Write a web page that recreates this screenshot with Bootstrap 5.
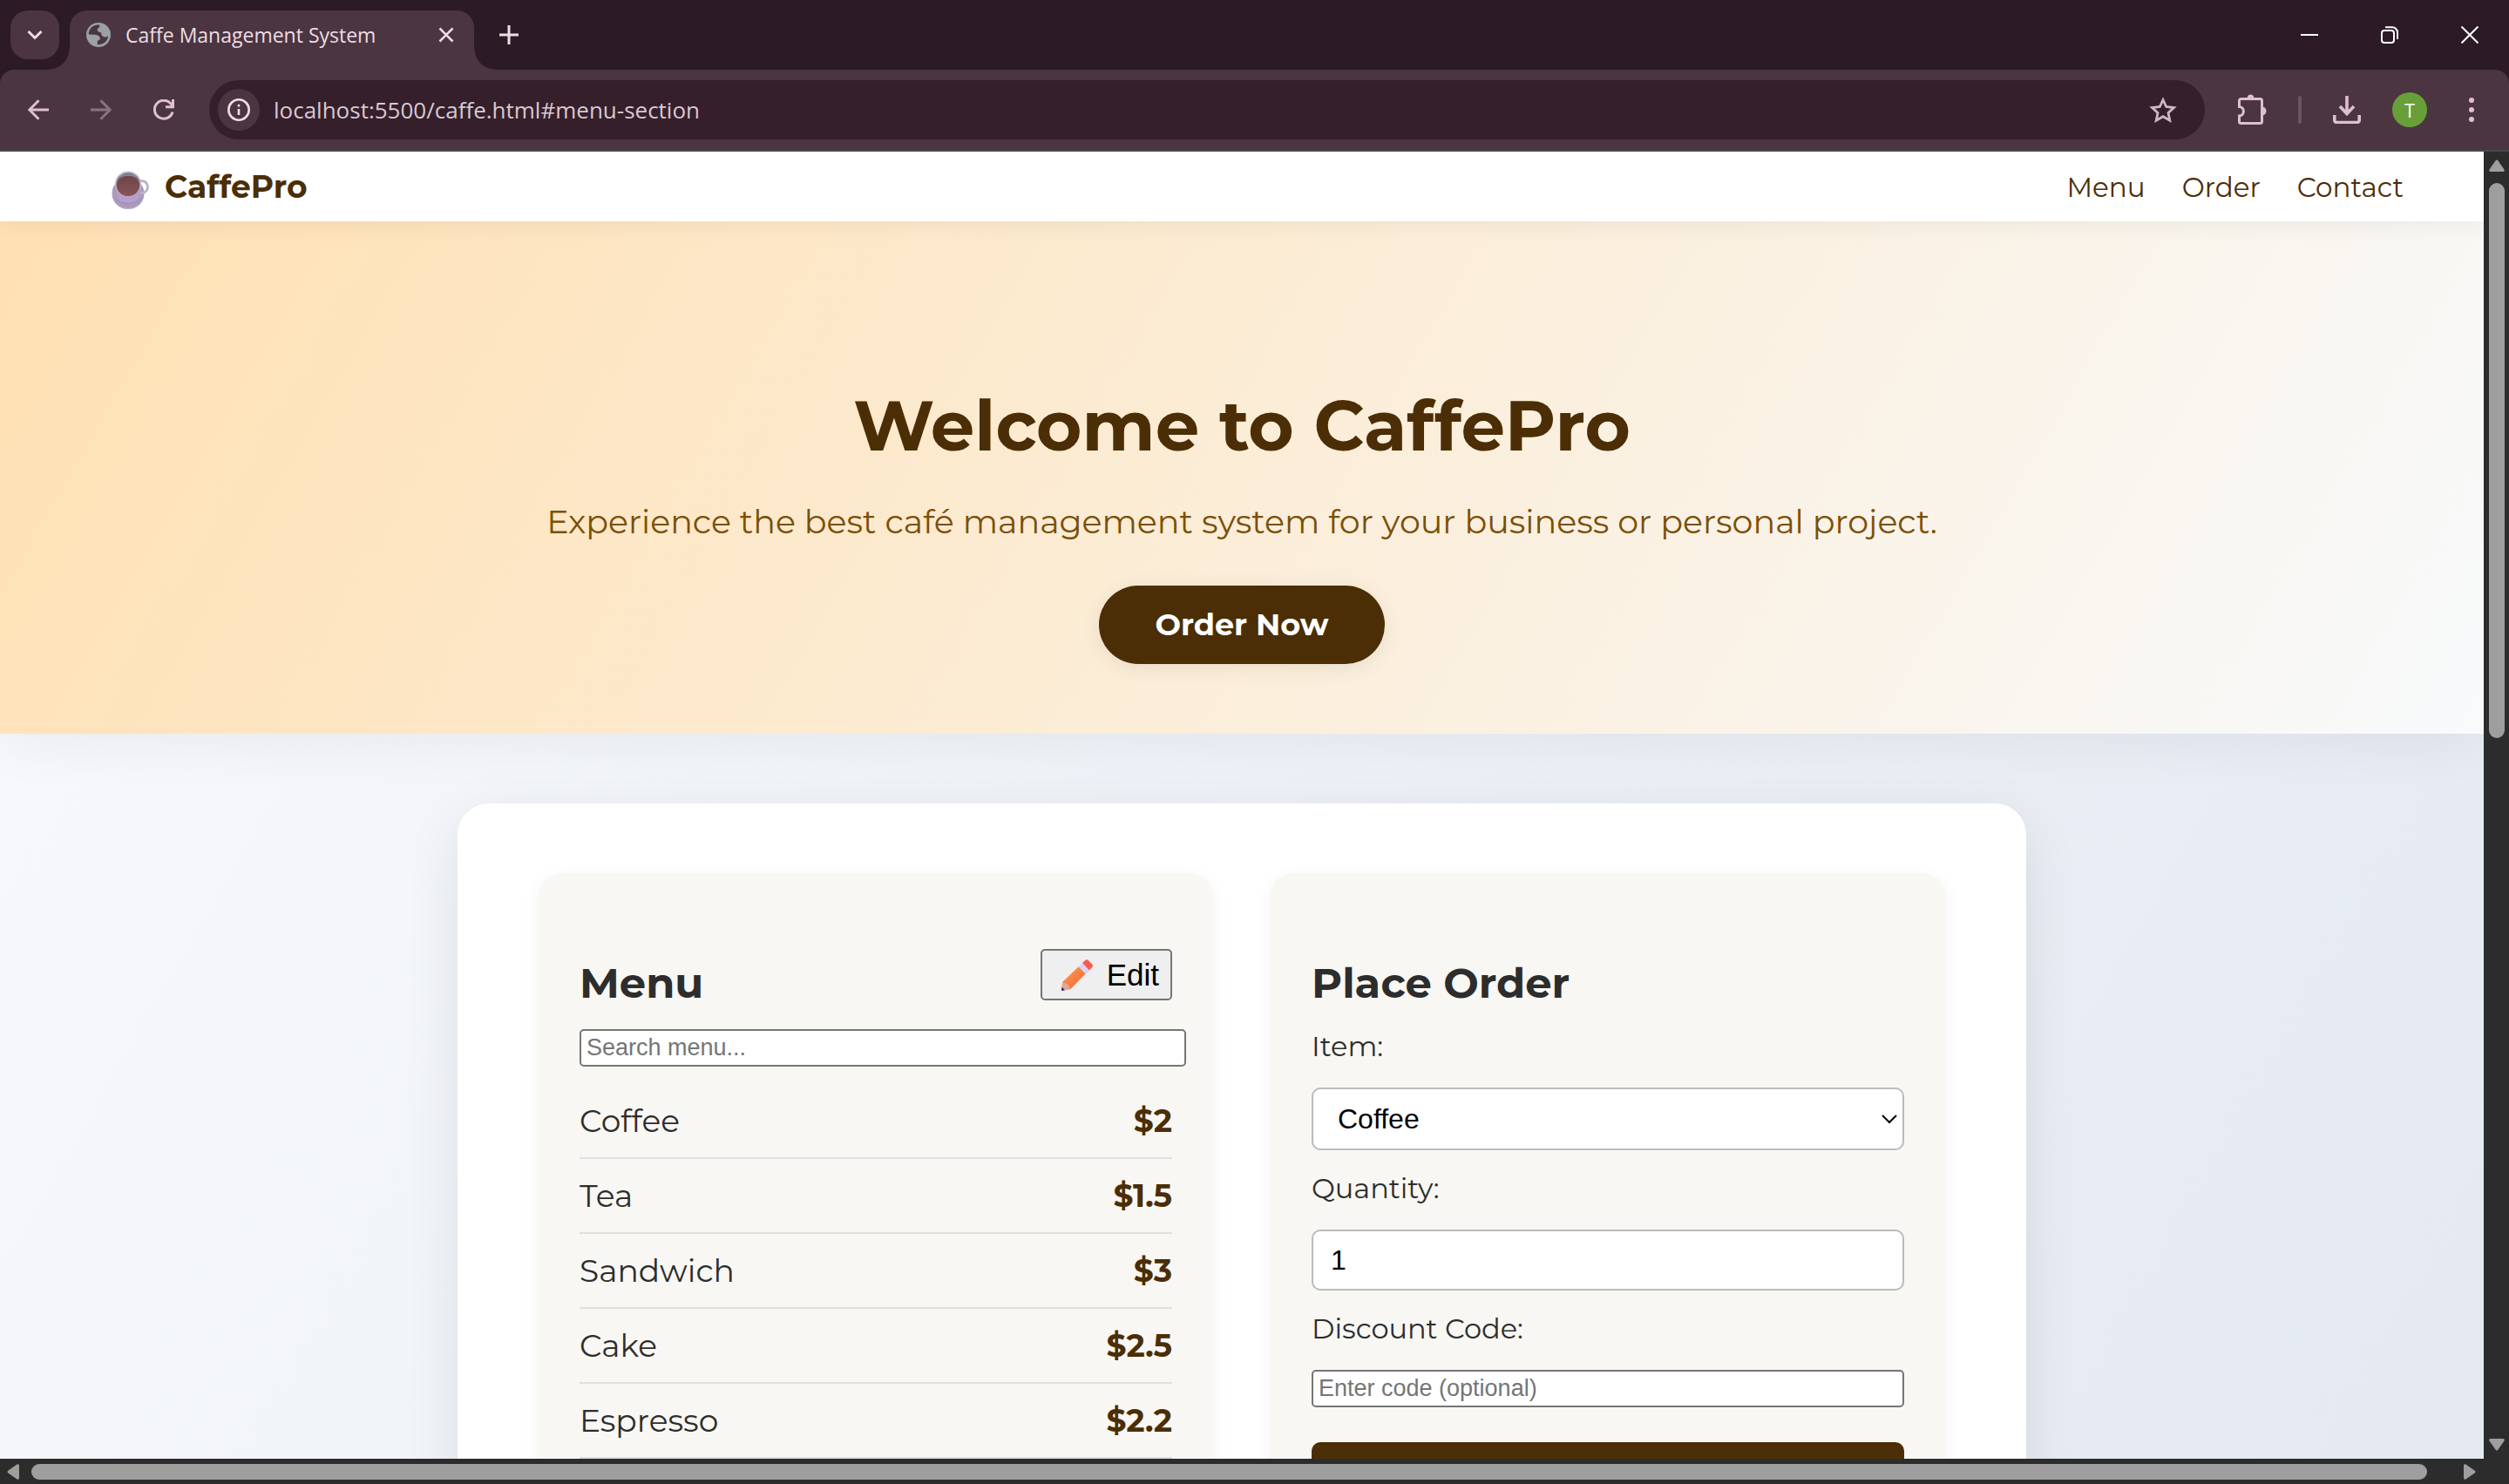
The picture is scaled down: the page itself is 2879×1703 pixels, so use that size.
<!DOCTYPE html>
<html lang="en">
<head>
<meta charset="utf-8">
<meta name="viewport" content="width=device-width, initial-scale=1">
<title>Caffe Management System</title>
<link href="https://cdn.jsdelivr.net/npm/bootstrap@5.3.0/dist/css/bootstrap.min.css" rel="stylesheet">
<style>
:root{--strip:#2c1a25;--bar:#4b3540;--field:#351f2b;--pink:#dfbfd0;--pale:#eddde5;--coffee:#4b2e05;--ink:#2d2d2d;--rail:#2c2c2c;--thumb:#9e9e9e}
body{background:var(--rail);font-family:Montserrat,Inter,sans-serif;color:var(--ink)}
svg{display:block;flex:none}
/* browser frame */
.frame{font-family:"Open Sans",sans-serif}
.frame button{border:0;padding:0;background:none;color:inherit}
.tabstrip{height:80px;padding:12px 12px 0;background:var(--strip);color:var(--pale)}
.frame .tab-search{width:56px;height:56px;border-radius:20px;background:var(--bar)}
.page-tab{position:relative;width:464px;height:68px;margin-left:12px;padding:0 23px 12px 18px;border-radius:20px 20px 0 0;background:var(--bar);font-size:23px}
.page-tab::before,.page-tab::after{content:"";position:absolute;bottom:0;width:24px;height:24px}
.page-tab::before{right:100%;background:radial-gradient(circle at 0 0,transparent 23px,var(--bar) 24px)}
.page-tab::after{left:100%;background:radial-gradient(circle at 100% 0,transparent 23px,var(--bar) 24px)}
.win-btns{gap:72px;padding:0 23px 12px 0;color:#fff}
.new-tab{margin:0 0 12px 29px;color:var(--pink)}
.toolbar-wrap{background:var(--strip)}
.toolbar{height:94px;padding:0 40px 0 32px;border-bottom:2px solid #4f454d;border-radius:16px 16px 0 0;background:var(--bar);color:var(--pink)}
.nav-btns{gap:48px;margin-right:40px}
.tool-btns{gap:36px;margin-left:38px}
.tool-btns .bar-menu{margin-left:12px}
.omnibox{height:68px;padding:0 32px 0 10px;border-radius:34px;background:var(--field);color:#cbb9c3;font-size:26px}
.site-info{width:48px;height:48px;border-radius:50%;background:var(--bar)}
.omnibox input{min-width:0;border:0;outline:0;background:none;color:#d8c8d1;font:inherit;padding:0}
.avatar-dot{width:40px;height:40px;border-radius:50%;background:#689f38;color:#fff;font-size:22px;line-height:40px}
.bar-split{width:4px;height:32px;border-radius:2px;background:#6b5560}
/* scroll rails */
.rail-y{width:29px;padding:9px 5px 9px 6px;background:var(--rail)}
.rail-x{height:29px;padding:6px 38px 5px 8px;background:var(--rail)}
.thumb-y{width:18px;height:43%;margin-top:13px;border-radius:9px;background:var(--thumb)}
.thumb-x{height:18px;margin:0 42px 0 14px;border-radius:9px;background:var(--thumb)}
/* page */
.page-view{background:linear-gradient(120deg,#f8fafc,#e4e9f2)}
.site-nav{position:relative;z-index:2;height:80px;padding:0 92px 0 128px;background:#fff;box-shadow:0 4px 24px rgba(0,0,0,.06)}
.site-nav a{color:var(--coffee);text-decoration:none;font-size:31px}
.site-nav .site-brand{font-size:36px;font-weight:700;gap:18px}
.site-brand svg{margin-top:8px}
.nav-set{gap:42px;padding-top:2px}
.hero-band{position:relative;z-index:1;height:588px;padding-top:186px;background:linear-gradient(120deg,#ffe0b2,#f8fafc);box-shadow:0 8px 64px rgba(0,0,0,.06)}
.hero-band h1{margin:0 0 38px;font-size:80px;line-height:98px;font-weight:700;color:var(--coffee)}
.hero-band p{margin:0 0 50px;font-size:38px;line-height:46px;color:#7b4f07}
.order-now{height:90px;padding:0 64px;border:0;border-radius:45px;background:var(--coffee);color:#fff;font-size:35px;font-weight:700;box-shadow:0 4px 24px rgba(0,0,0,.08)}
.board{max-width:1800px;margin:80px auto;padding:80px 92px;gap:64px;border-radius:36px;background:#fff;box-shadow:0 16px 64px rgba(0,0,0,.09)}
.panel{flex:1 1 0;min-width:0;padding:87px 48px 48px;border-radius:28px;background:#f8f7f3;box-shadow:0 4px 24px rgba(0,0,0,.04)}
.panel-head{height:68px;margin-bottom:24px}
.panel-head h2{margin:0;font-size:48px;line-height:58px;font-weight:700}
.edit-btn{height:59px;padding:0 13px 0 22px;gap:16px;border:2px solid #767676;border-radius:5px;background:#efefef;color:#000;font:35px "Liberation Sans",sans-serif}
.plain-box{display:block;box-sizing:content-box;width:100%;height:35px;padding:2px 6px;border:2px solid #767676;border-radius:5px;background:#fff;font:27px "Liberation Sans",sans-serif}
.plain-box.fit{box-sizing:border-box;height:43px}
.plain-box::placeholder{color:#757575;opacity:1}
.menu-rows{list-style:none;margin:20px 0 0;padding:0;font-size:36px;line-height:44px}
.menu-rows li{padding:20px 0;border-bottom:2px solid #e0e0e0}
.menu-rows b{color:var(--coffee)}
.order-form label{margin-bottom:28px;font-size:32px;line-height:39px}
.big-box{display:block;width:100%;height:70px;margin-bottom:24px;padding:0 20px;border:2px solid #bbb;border-radius:10px;background:#fff;color:#000;font:32px "Liberation Sans",sans-serif}
select.big-box{height:72px;padding:0 28px;appearance:none;background:#fff url("data:image/svg+xml,%3Csvg xmlns='http://www.w3.org/2000/svg' width='18' height='12'%3E%3Cpath d='M1 2 9 10 17 2' fill='none' stroke='%23000' stroke-width='2'/%3E%3C/svg%3E") no-repeat right 6px center}
.submit-btn{width:100%;height:84px;margin-top:40px;border:0;border-radius:10px;background:var(--coffee)}
</style>
</head>
<body class="d-flex flex-column vh-100 overflow-hidden">
<header class="frame">
  <div class="tabstrip d-flex">
    <button class="tab-search d-flex align-items-center justify-content-center" aria-label="Search tabs"><svg width="18" height="12" fill="none" stroke="currentColor" stroke-width="3"><path d="M1.500 2 9 9.500 16.500 2"/></svg></button>
    <div class="page-tab d-flex align-items-center">
      <svg class="me-3" width="30" height="30" viewBox="0 0 30 30"><circle cx="15" cy="15" r="14" fill="#9aa0a6"/><path d="M14.500 3.500C8 3.500 3.500 8.500 3.800 14.500l7 .200c4 .200 6 2 6 4.500 0 1.500-1.300 2.300-3 2.300v4.700c6.500.500 12-4 12.300-10-2.300 1.800-6.300 1.600-7.300-.600-.800-2 .300-3.200-2.300-3.500-3-.400-3.600-4-1.500-5 1.300-.700 2-1.500 1-3.600z" fill="#4b3540"/></svg>
      <span class="flex-fill">Caffe Management System</span>
      <button aria-label="Close tab"><svg width="18" height="18" stroke="currentColor" stroke-width="2.600"><path d="M1.500 1.500 16.500 16.500M16.500 1.500 1.500 16.500"/></svg></button>
    </div>
    <button class="new-tab" aria-label="New tab"><svg width="22" height="22" stroke="currentColor" stroke-width="3"><path d="M11 0V22M0 11H22"/></svg></button>
    <div class="win-btns d-flex align-items-center ms-auto">
      <button aria-label="Minimize"><svg width="20" height="20" stroke="currentColor" stroke-width="2"><path d="M0 10H20"/></svg></button>
      <button aria-label="Restore"><svg width="20" height="20" fill="none" stroke="currentColor" stroke-width="2"><rect x="1" y="5" width="14" height="14" rx="3"/><path d="M5 1.200h8a6 6 0 0 1 6 6V15"/></svg></button>
      <button aria-label="Close"><svg width="20" height="20" stroke="currentColor" stroke-width="2"><path d="M.500.500 19.500 19.500M19.500.500.500 19.500"/></svg></button>
    </div>
  </div>
  <div class="toolbar-wrap">
  <div class="toolbar d-flex align-items-center">
    <div class="nav-btns d-flex">
      <button aria-label="Back"><svg width="24" height="24" fill="none" stroke="currentColor" stroke-width="3"><path d="M24 12H2M12.500 1.200 1.800 12l10.700 10.800"/></svg></button>
      <button aria-label="Forward"><svg width="24" height="24" fill="none" stroke="#8a7480" stroke-width="3"><path d="M0 12H22M11.500 1.200 22.200 12 11.500 22.800"/></svg></button>
      <button aria-label="Reload"><svg width="24" height="24" fill="none" stroke="currentColor" stroke-width="3"><path d="M22 14.500A10.500 10.500 0 1 1 20 5l2.500 3.500M22.500 0V8.800H14"/></svg></button>
    </div>
    <div class="omnibox d-flex align-items-center flex-fill">
      <span class="site-info d-flex align-items-center justify-content-center"><svg width="26" height="26" viewBox="0 0 26 26" fill="none" stroke="#eddde5"><circle cx="13" cy="13" r="11.700" stroke-width="2.600"/><path d="M13 12v7M13 6.800v2.800" stroke-width="2.600"/></svg></span>
      <input class="flex-fill ms-3" aria-label="Address" value="localhost:5500/caffe.html#menu-section">
      <button aria-label="Bookmark"><svg width="32" height="31" viewBox="0 0 32 31" fill="none" stroke="#cbb9c3" stroke-width="2.800"><path d="M16 3.500 19.700 11.500 28.500 12.500 22 18.500 23.800 27.200 16 22.700 8.200 27.200 10 18.500 3.500 12.500 12.300 11.500Z"/></svg></button>
    </div>
    <div class="tool-btns d-flex align-items-center">
      <button aria-label="Extensions"><svg width="33" height="36" viewBox="0 0 33 36"><path d="M1.500 14.500V7.500a2 2 0 0 1 2-2h22a2 2 0 0 1 2 2v24a2 2 0 0 1-2 2h-22a2 2 0 0 1-2-2v-6.500c6.500-.500 6.500-10 0-10.500z" fill="none" stroke="currentColor" stroke-width="3"/><path d="M10.500 5a4 4.500 0 0 1 8 0zM28 14.500a4.500 5 0 0 1 0 10z" fill="currentColor"/></svg></button>
      <span class="bar-split"></span>
      <button aria-label="Downloads"><svg width="32" height="32" fill="none" stroke="currentColor" stroke-width="3.600"><path d="M16 0V20M8 12l8 8.500 8-8.500M1.800 22v6a2.500 2.500 0 0 0 2.500 2.500h23.400a2.500 2.500 0 0 0 2.500-2.500v-6"/></svg></button>
      <span class="avatar-dot text-center">T</span>
      <button class="bar-menu" aria-label="Browser menu"><svg width="6" height="28" fill="currentColor"><circle cx="3" cy="3" r="3"/><circle cx="3" cy="14" r="3"/><circle cx="3" cy="25" r="3"/></svg></button>
    </div>
  </div>
  </div>
</header>

<div class="d-flex flex-fill overflow-hidden">
  <div class="page-view flex-fill overflow-hidden">
    <nav class="site-nav d-flex align-items-center justify-content-between">
      <a class="site-brand d-flex align-items-center" href="#">
        <svg width="43" height="44" viewBox="0 0 43 44"><defs><linearGradient id="cupSide" x1="0" x2="0" y1="0" y2="1"><stop offset="0" stop-color="#aaa0b8"/><stop offset="1" stop-color="#b79fd4"/></linearGradient><linearGradient id="brew" x1="0" x2="0" y1="0" y2="1"><stop offset="0" stop-color="#6d4648"/><stop offset="1" stop-color="#8b5358"/></linearGradient></defs><ellipse cx="19" cy="26" rx="18.500" ry="18" fill="#a99bb9"/><path d="M1 28a18 16 0 0 0 36 0c-1 20-35 20-36 0z" fill="#c3b4da"/><circle cx="34.500" cy="18.500" r="7" fill="none" stroke="#bdb2cc" stroke-width="3"/><path d="M4.500 15 6 29c2 10 24 10 26.500 0L34 15z" fill="url(#cupSide)"/><path d="M5 32a15 9 0 0 0 28 0" fill="none" stroke="#a68fc2" stroke-width="1.500"/><ellipse cx="19" cy="15" rx="15" ry="14.500" fill="#c2b9ce"/><ellipse cx="19" cy="15.500" rx="13.500" ry="13" fill="#77676f"/><ellipse cx="19" cy="17.500" rx="13" ry="11.500" fill="url(#brew)"/><path d="M6.500 10a14 11 0 0 1 25 0c-4-6-21-6-25 0z" fill="#9a8fa8"/></svg>
        <span>CaffePro</span>
      </a>
      <div class="nav-set d-flex">
        <a href="#menu-section">Menu</a><a href="#order">Order</a><a href="#contact">Contact</a>
      </div>
    </nav>
    <section class="hero-band text-center">
      <h1>Welcome to CaffePro</h1>
      <p>Experience the best café management system for your business or personal project.</p>
      <button class="order-now">Order Now</button>
    </section>
    <main class="board d-flex">
      <section class="panel" id="menu-section">
        <div class="panel-head d-flex justify-content-between align-items-start">
          <h2 class="align-self-end">Menu</h2>
          <button class="edit-btn d-flex align-items-center">
            <svg width="36" height="36" viewBox="0 0 36 36"><defs><linearGradient id="wood" x1="0" x2="1" y1="0" y2="1"><stop offset="0" stop-color="#ffa24a"/><stop offset="1" stop-color="#f0603c"/></linearGradient></defs><path d="M1 26 20 8l8 8L10 34.500z" fill="url(#wood)"/><path d="M1 26 0 35.500 10 34.500 8 29z" fill="#e0a79b"/><path d="M0 36 .500 31.500 4 35.500z" fill="#4b2340"/><path d="M19.500 8.500 24 4l8.500 8.500L28 17z" fill="#dcd3ee"/><path d="M24 4 27 1.200q2-2 4 0l4 4q2 2 0 4L32 12.500z" fill="#fa5a50"/></svg>
            Edit</button>
        </div>
        <input class="plain-box" type="text" placeholder="Search menu..." aria-label="Search menu">
        <ul class="menu-rows">
          <li class="d-flex justify-content-between"><span>Coffee</span><b>$2</b></li>
          <li class="d-flex justify-content-between"><span>Tea</span><b>$1.5</b></li>
          <li class="d-flex justify-content-between"><span>Sandwich</span><b>$3</b></li>
          <li class="d-flex justify-content-between"><span>Cake</span><b>$2.5</b></li>
          <li class="d-flex justify-content-between"><span>Espresso</span><b>$2.2</b></li>
        </ul>
      </section>
      <section class="panel" id="order">
        <div class="panel-head d-flex align-items-end"><h2>Place Order</h2></div>
        <form class="order-form">
          <label class="d-block" for="item">Item:</label>
          <select class="big-box" id="item"><option>Coffee</option></select>
          <label class="d-block" for="qty">Quantity:</label>
          <input class="big-box" id="qty" type="text" inputmode="numeric" value="1">
          <label class="d-block" for="code">Discount Code:</label>
          <input class="plain-box fit" id="code" type="text" placeholder="Enter code (optional)">
          <button class="submit-btn" type="button" aria-label="Place order"></button>
        </form>
      </section>
    </main>
  </div>
  <div class="rail-y d-flex flex-column">
    <svg width="18" height="14" fill="#9e9e9e"><path d="M7.500 1.500q1.500-2 3 0l7 10q1 2.500-1.500 2.500H2Q-.500 14 .500 11.500z"/></svg>
    <div class="thumb-y"></div>
    <svg class="mt-auto" width="18" height="14" fill="#9e9e9e"><path d="M7.500 12.500q1.500 2 3 0l7-10Q18.500 0 16 0H2Q-.500 0 .500 2.500z"/></svg>
  </div>
</div>
<div class="rail-x d-flex">
  <svg width="14" height="18" fill="#9e9e9e"><path d="M1.500 7.500q-2 1.500 0 3l10 7q2.500 1 2.500-1.500V2Q14-.500 11.500.500z"/></svg>
  <div class="thumb-x flex-fill"></div>
  <svg width="14" height="18" fill="#9e9e9e"><path d="M12.500 7.500q2 1.500 0 3l-10 7Q0 18.500 0 16V2Q0-.500 2.500.500z"/></svg>
</div>
<script src="https://cdn.jsdelivr.net/npm/bootstrap@5.3.0/dist/js/bootstrap.bundle.min.js"></script>
</body>
</html>
